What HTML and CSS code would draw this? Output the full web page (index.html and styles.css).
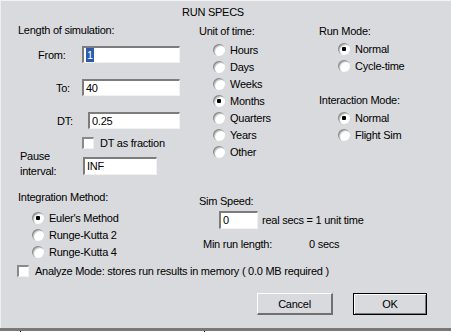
FILE: index.html
```html
<!DOCTYPE html>
<html lang="en">

<head>
    <meta charset="UTF-8">
    <title>Run Specs</title>
    <link rel="stylesheet" href="styles.css">
</head>

<body>
    <div class="dialog">
        <div class="title">RUN SPECS</div>

        <div class="top">
            <div class="col col-sim">
                <div class="heading">Length of simulation:</div>

                <div class="field-row row-from">
                    <span class="field-label">From:</span>
                    <div class="field field-wide"><span class="selected">1</span></div>
                </div>
                <div class="field-row row-to">
                    <span class="field-label">To:</span>
                    <div class="field field-wide">40</div>
                </div>
                <div class="field-row row-dt">
                    <span class="field-label">DT:</span>
                    <div class="field field-dt">0.25</div>
                </div>

                <div class="check-row row-fraction">
                    <span class="checkbox"></span>
                    <span>DT as fraction</span>
                </div>

                <div class="pause-row">
                    <span class="pause-label">Pause<br>interval:</span>
                    <div class="field field-pause">INF</div>
                </div>
            </div>

            <div class="col col-unit">
                <div class="heading">Unit of time:</div>
                <div class="radio-list">
                    <div class="radio-row"><span class="radio"></span>Hours</div>
                    <div class="radio-row"><span class="radio"></span>Days</div>
                    <div class="radio-row"><span class="radio"></span>Weeks</div>
                    <div class="radio-row"><span class="radio checked"></span>Months</div>
                    <div class="radio-row"><span class="radio"></span>Quarters</div>
                    <div class="radio-row"><span class="radio"></span>Years</div>
                    <div class="radio-row"><span class="radio"></span>Other</div>
                </div>
            </div>

            <div class="col col-mode">
                <div class="heading">Run Mode:</div>
                <div class="radio-list">
                    <div class="radio-row"><span class="radio checked"></span>Normal</div>
                    <div class="radio-row"><span class="radio"></span>Cycle-time</div>
                </div>
                <div class="heading heading-interaction">Interaction Mode:</div>
                <div class="radio-list">
                    <div class="radio-row"><span class="radio checked"></span>Normal</div>
                    <div class="radio-row"><span class="radio"></span>Flight Sim</div>
                </div>
            </div>
        </div>

        <div class="middle">
            <div class="col col-int">
                <div class="heading">Integration Method:</div>
                <div class="radio-list">
                    <div class="radio-row"><span class="radio checked"></span>Euler's Method</div>
                    <div class="radio-row"><span class="radio"></span>Runge-Kutta 2</div>
                    <div class="radio-row"><span class="radio"></span>Runge-Kutta 4</div>
                </div>
            </div>

            <div class="col col-speed">
                <div class="heading">Sim Speed:</div>
                <div class="speed-row">
                    <div class="field field-speed">0</div>
                    <span>real secs = 1 unit time</span>
                </div>
                <div class="min-row">
                    <span class="min-label">Min run length:</span>
                    <span>0 secs</span>
                </div>
            </div>
        </div>

        <div class="check-row row-analyze">
            <span class="checkbox"></span>
            <span>Analyze Mode: stores run results in memory ( 0.0 MB required )</span>
        </div>

        <div class="buttons">
            <button class="btn">Cancel</button>
            <button class="btn btn-default">OK</button>
        </div>
    </div>

    <div class="below">
        <span class="tick tick-one"></span>
        <span class="tick tick-two"></span>
    </div>
</body>

</html>
```

FILE: styles.css
```css
* {
    margin: 0;
    padding: 0;
    box-sizing: border-box;
}

body {
    width: 451px;
    height: 332px;
    overflow: hidden;
    font-family: 'Liberation Sans', Arial, sans-serif;
    font-size: 11px;
    letter-spacing: -0.25px;
    line-height: 14px;
    color: #000;
    background: #fff;
}

.dialog {
    width: 451px;
    height: 328px;
    background: #d9dadd;
    border-top: 1px solid #f4f4f5;
    border-left: 1px solid #eeeff0;
    padding-left: 17px;
    display: flex;
    flex-direction: column;
}

.title {
    margin-top: 4px;
    margin-left: 164px;
}

/* top block: three columns */
.top {
    display: flex;
    margin-top: 4px;
}

.col-sim {
    width: 181px;
}

.col-unit {
    width: 120px;
    padding-top: 1px;
}

.col-mode {
    padding-top: 1px;
}

.field-row {
    display: flex;
    align-items: center;
    height: 17px;
}

.row-from {
    margin-top: 9px;
}

.row-from .field-label {
    margin-left: 20px;
    width: 44px;
}

.row-to {
    margin-top: 16px;
}

.row-to .field-label {
    margin-left: 38px;
    width: 26px;
}

.row-dt {
    margin-top: 16px;
}

.row-dt .field-label {
    margin-left: 39px;
    width: 31px;
}

.field {
    height: 17px;
    background: #fff;
    border-top: 2px solid #7c7c7c;
    border-left: 2px solid #7c7c7c;
    border-right: 1px solid #f2f2f2;
    border-bottom: 1px solid #f2f2f2;
    padding-left: 2px;
    line-height: 14px;
    white-space: nowrap;
}

.field-wide {
    width: 98px;
}

.field-dt {
    width: 92px;
}

.field-pause {
    width: 74px;
    height: 18px;
    margin-top: 8px;
}

.field-speed {
    width: 39px;
    height: 18px;
}

.selected {
    display: inline-block;
    padding: 0 1px;
    background: #2b5bab;
    color: #fff;
}

.check-row {
    display: flex;
    align-items: center;
    gap: 6px;
}

.row-fraction {
    height: 12px;
    margin-top: 8px;
    margin-left: 64px;
}

.checkbox {
    width: 12px;
    height: 12px;
    background: #fff;
    border-top: 2px solid #8a8a8a;
    border-left: 2px solid #8a8a8a;
    border-right: 1px solid #f0f0f0;
    border-bottom: 1px solid #f0f0f0;
}

.pause-row {
    display: flex;
    align-items: flex-start;
}

.pause-label {
    width: 63px;
    margin-left: 2px;
    line-height: 15px;
}

/* radio buttons */
.radio-list {
    display: flex;
    flex-direction: column;
}

.col-unit .radio-list {
    margin-top: 3px;
    margin-left: 14px;
}

.col-mode .radio-list {
    margin-left: 19px;
    margin-top: 2px;
}

.heading-interaction {
    margin-top: 19px;
}

.radio-row {
    display: flex;
    align-items: center;
    gap: 5px;
    height: 17px;
}

.radio {
    position: relative;
    width: 12px;
    height: 12px;
    border-radius: 50%;
    background: #fff;
    box-shadow: inset 1px 1px 0 #8c8c8c, inset 2px 2px 1px #c4c4c4;
}

.radio.checked::after {
    content: '';
    position: absolute;
    left: 4px;
    top: 4px;
    width: 4px;
    height: 4px;
    border-radius: 1px;
    background: #000;
}

/* integration + sim speed */
.middle {
    display: flex;
    margin-top: 11px;
}

.col-int {
    width: 181px;
}

.col-int .radio-list {
    margin-top: 5px;
    margin-left: 14px;
}

.col-speed {
    padding-top: 4px;
}

.speed-row {
    display: flex;
    align-items: center;
    gap: 4px;
    margin-top: 3px;
    margin-left: 20px;
}

.min-row {
    display: flex;
    margin-top: 8px;
    margin-left: 4px;
}

.min-label {
    width: 106px;
}

.row-analyze {
    height: 14px;
    margin-top: 4px;
    margin-left: -1px;
}

/* dialog buttons */
.buttons {
    display: flex;
    justify-content: flex-end;
    gap: 20px;
    margin-top: 15px;
    padding-right: 24px;
}

.btn {
    width: 76px;
    height: 22px;
    font: inherit;
    letter-spacing: inherit;
    color: #000;
    background: #d9dadd;
    border-top: 1px solid #fff;
    border-left: 1px solid #fff;
    border-right: 2px solid #707070;
    border-bottom: 2px solid #707070;
}

.btn-default {
    width: 74px;
    border: 1px solid #000;
    box-shadow: inset 1px 1px 0 #fff, inset -1px -1px 0 #7a7a7a;
}

.below {
    display: flex;
    height: 4px;
    border-top: 3px solid #787878;
    background: #fff;
}

.tick {
    width: 1px;
    height: 1px;
    background: #000;
}

.tick-one {
    margin-left: 20px;
}

.tick-two {
    margin-left: 183px;
}
```
